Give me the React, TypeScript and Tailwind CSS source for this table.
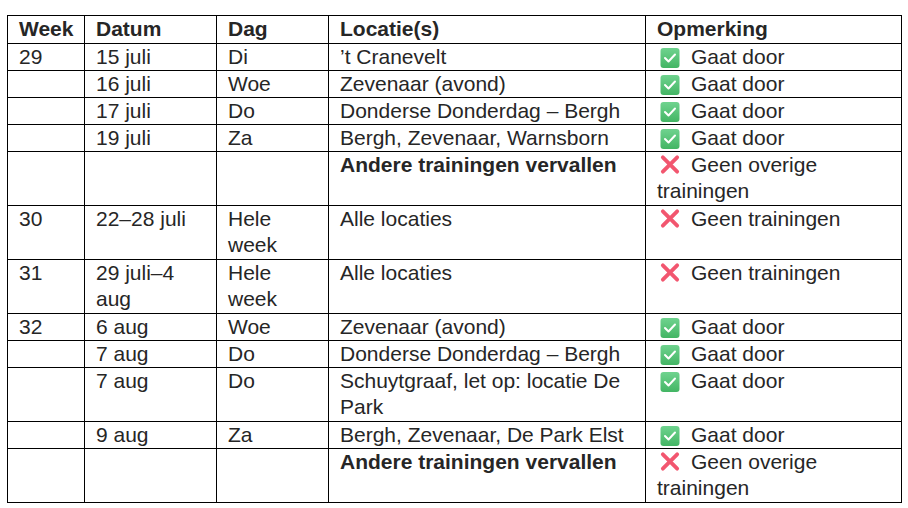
import React from "react";

function Check() {
  return (
    <svg viewBox="0 0 20 20" className="inline-block w-[20px] h-[21px] ml-[3px] mr-[11px] align-[-4px]">
      <defs>
        <linearGradient id="g" x1="0" y1="0" x2="0" y2="1">
          <stop offset="0" stopColor="#6fd38f" />
          <stop offset="1" stopColor="#43b564" />
        </linearGradient>
      </defs>
      <rect x="0.5" y="0.5" width="19" height="20" rx="3" fill="url(#g)" />
      <path d="M5 10.5 L8.5 14 L15 7" fill="none" stroke="#fff" strokeWidth="2" strokeLinecap="round" strokeLinejoin="round" />
    </svg>
  );
}

function Cross() {
  return (
    <svg viewBox="0 0 22 22" className="inline-block w-[22px] h-[21px] ml-[2px] mr-[10px] align-[-3px]">
      <path d="M3.5 3.5 L18.5 18.5 M18.5 3.5 L3.5 18.5" fill="none" stroke="#f2566f" strokeWidth="4" strokeLinecap="round" />
    </svg>
  );
}

type Row = {
  week?: string;
  datum?: string;
  dag?: string;
  loc: string;
  bold?: boolean;
  ok: boolean;
  note: string;
  tall?: boolean;
};

const rows: Row[] = [
  { week: "29", datum: "15 juli", dag: "Di", loc: "\u2019t Cranevelt", ok: true, note: "Gaat door" },
  { datum: "16 juli", dag: "Woe", loc: "Zevenaar (avond)", ok: true, note: "Gaat door" },
  { datum: "17 juli", dag: "Do", loc: "Donderse Donderdag \u2013 Bergh", ok: true, note: "Gaat door" },
  { datum: "19 juli", dag: "Za", loc: "Bergh, Zevenaar, Warnsborn", ok: true, note: "Gaat door" },
  { loc: "Andere trainingen vervallen", bold: true, ok: false, note: "Geen overige trainingen", tall: true },
  { week: "30", datum: "22\u201328 juli", dag: "Hele week", loc: "Alle locaties", ok: false, note: "Geen trainingen", tall: true },
  { week: "31", datum: "29 juli\u20134 aug", dag: "Hele week", loc: "Alle locaties", ok: false, note: "Geen trainingen", tall: true },
  { week: "32", datum: "6 aug", dag: "Woe", loc: "Zevenaar (avond)", ok: true, note: "Gaat door" },
  { datum: "7 aug", dag: "Do", loc: "Donderse Donderdag \u2013 Bergh", ok: true, note: "Gaat door" },
  { datum: "7 aug", dag: "Do", loc: "Schuytgraaf, let op: locatie De Park", ok: true, note: "Gaat door", tall: true },
  { datum: "9 aug", dag: "Za", loc: "Bergh, Zevenaar, De Park Elst", ok: true, note: "Gaat door" },
  { loc: "Andere trainingen vervallen", bold: true, ok: false, note: "Geen overige trainingen", tall: true },
];

const td = "border border-black px-[11px] py-0 align-top";

export default function App() {
  return (
    <div
      className="w-[908px] h-[508px] bg-white pl-[7px] pt-[15px] text-[#262626] text-[21px] leading-[26px]"
      style={{ fontFamily: '"Liberation Sans", Arial, sans-serif' }}
    >
      <table className="border-collapse table-fixed w-[894px]">
        <colgroup>
          <col className="w-[77px]" />
          <col className="w-[132px]" />
          <col className="w-[112px]" />
          <col className="w-[317px]" />
          <col className="w-[256px]" />
        </colgroup>
        <thead>
          <tr className="h-[28px]">
            <th className={td + " text-left font-bold"}>Week</th>
            <th className={td + " text-left font-bold"}>Datum</th>
            <th className={td + " text-left font-bold"}>Dag</th>
            <th className={td + " text-left font-bold"}>Locatie(s)</th>
            <th className={td + " text-left font-bold"}>Opmerking</th>
          </tr>
        </thead>
        <tbody>
          {rows.map((r, i) => (
            <tr key={i} className={r.tall ? "h-[54px]" : "h-[27px]"}>
              <td className={td}>{r.week ?? ""}</td>
              <td className={td}>{r.datum ?? ""}</td>
              <td className={td}>{r.dag ?? ""}</td>
              <td className={td + (r.bold ? " font-bold" : "")}>{r.loc}</td>
              <td className={td}>
                {r.ok ? <Check /> : <Cross />}
                {r.note}
              </td>
            </tr>
          ))}
        </tbody>
      </table>
    </div>
  );
}
